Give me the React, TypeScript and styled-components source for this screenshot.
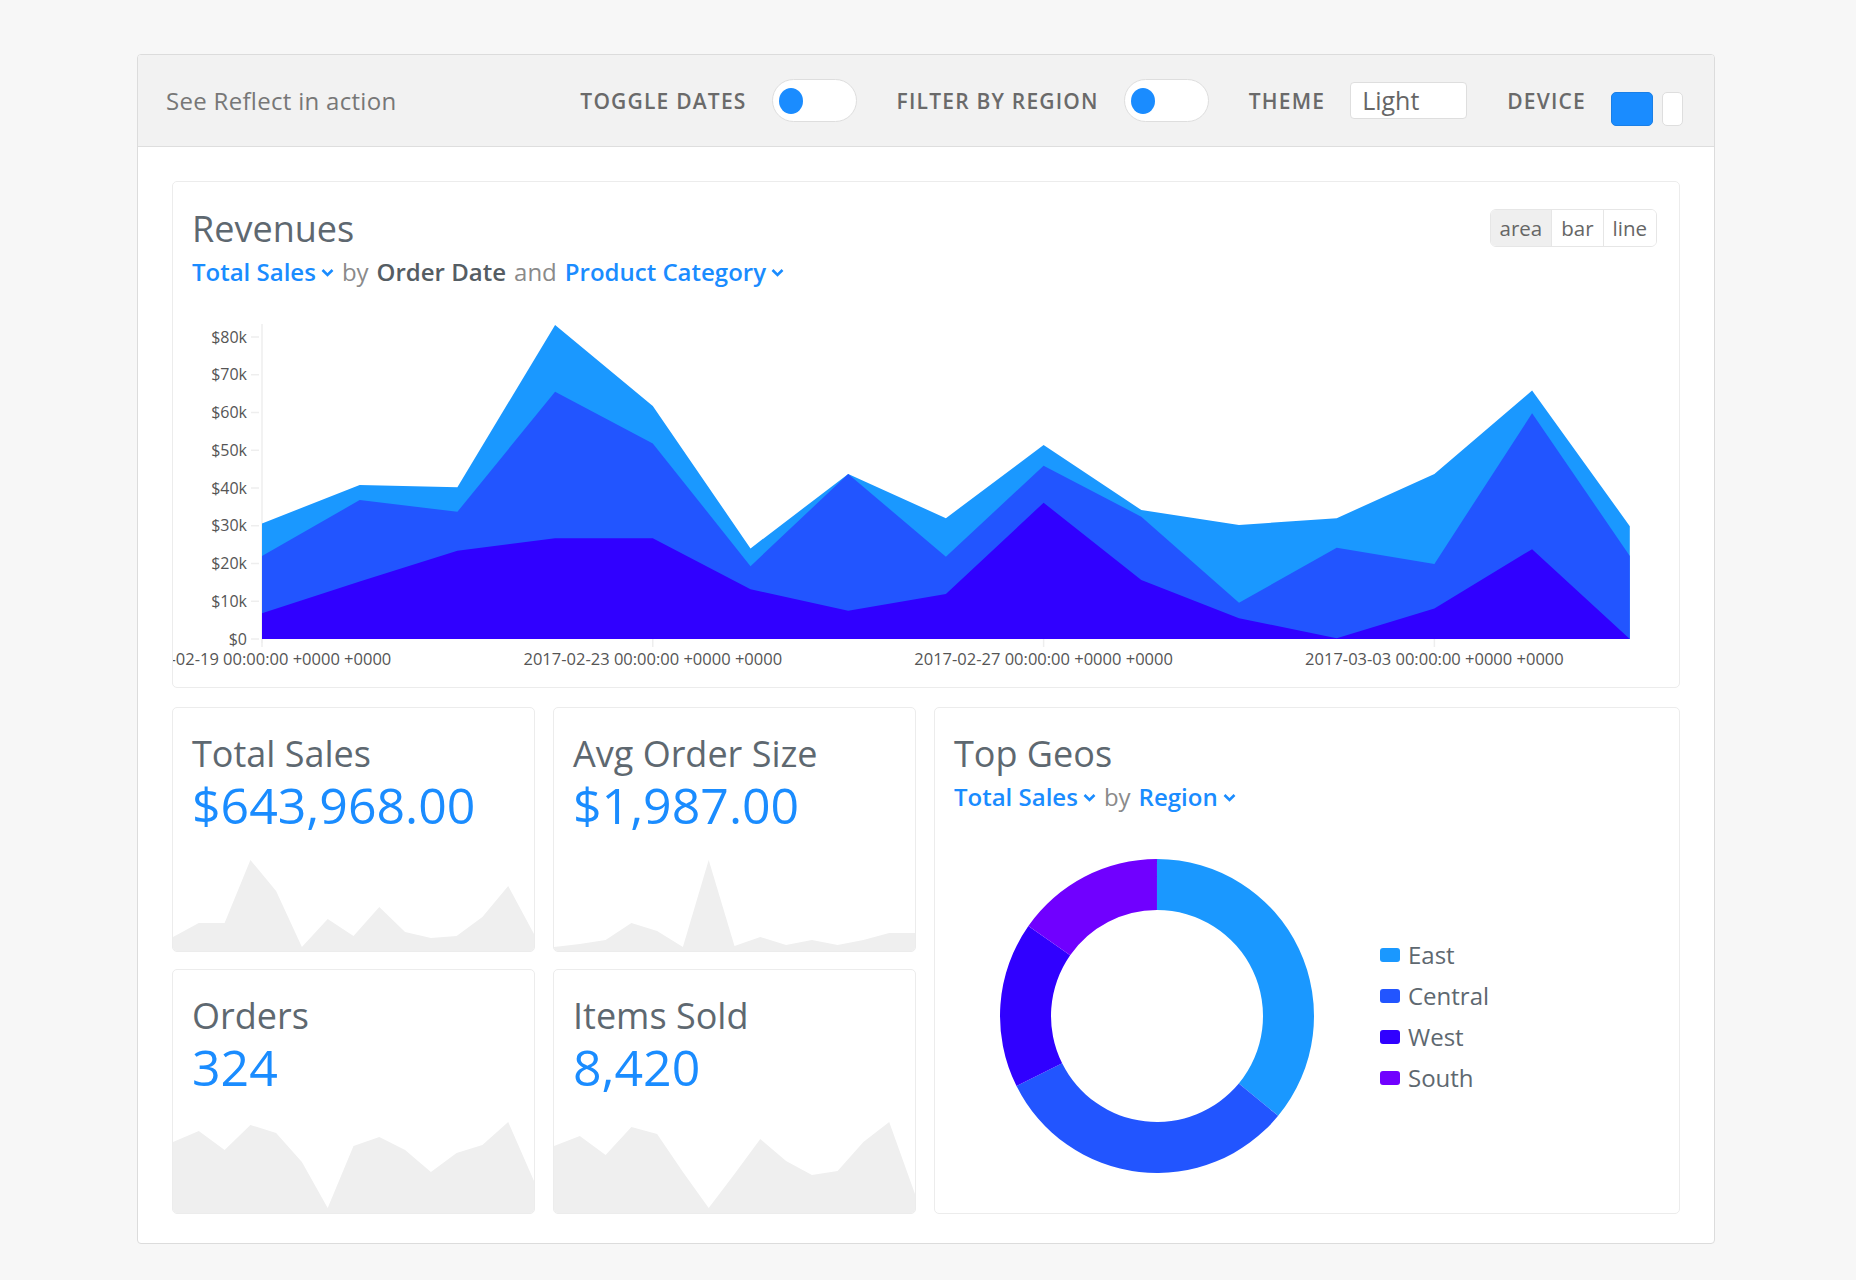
import React from "react";
import styled, { createGlobalStyle } from "styled-components";

const GlobalStyle = createGlobalStyle`
  body {
    margin: 0;
    background: #f7f7f7;
    font-family: "Open Sans", "Liberation Sans", sans-serif;
  }
`;

const BLUE = "#1a8cff";
const LAYER = ["#1a98ff", "#2255ff", "#3000ff", "#7000ff"];

const Page = styled.div`
  padding: 54px 0 36px;
`;

const Frame = styled.div`
  width: 1578px;
  margin: 0 0 0 137px;
  box-sizing: border-box;
  border: 1px solid #dcdcdc;
  border-radius: 4px;
  background: #fff;
  overflow: hidden;
`;

const TopBar = styled.div`
  height: 92px;
  box-sizing: border-box;
  display: flex;
  align-items: center;
  padding: 0 31px 0 28px;
  background: #f2f2f2;
  border-bottom: 1px solid #dedede;
`;

const Tagline = styled.div`
  font-size: 24px;
  letter-spacing: 0.3px;
  color: #777;
  margin-right: auto;
`;

const Controls = styled.div`
  display: flex;
  align-items: center;
  gap: 40px;
`;

const Control = styled.div`
  display: flex;
  align-items: center;
  gap: 25px;
`;

const ControlLabel = styled.span`
  font-size: 21px;
  font-weight: 600;
  letter-spacing: 1.2px;
  color: #6a6a6a;
  text-transform: uppercase;
`;

const Toggle = styled.div`
  width: 85px;
  height: 43px;
  box-sizing: border-box;
  border: 1px solid #dedede;
  border-radius: 22px;
  background: #fff;
  display: flex;
  align-items: center;
  padding-left: 6px;

  &::before {
    content: "";
    width: 24px;
    height: 26px;
    border-radius: 50%;
    background: ${BLUE};
  }
`;

const Select = styled.div`
  width: 117px;
  height: 37px;
  box-sizing: border-box;
  border: 1px solid #dedede;
  border-radius: 4px;
  background: #fff;
  padding: 0 11px;
  font-size: 25px;
  line-height: 35px;
  color: #666;
`;

const DeviceSet = styled.div`
  display: flex;
  gap: 9px;
  margin-top: 16px;
`;

const DeviceButton = styled.div<{ $active?: boolean; $w: number }>`
  width: ${({ $w }) => $w}px;
  height: 34px;
  box-sizing: border-box;
  border-radius: 5px;
  border: 1px solid ${({ $active }) => ($active ? "#1a7fe6" : "#dedede")};
  background: ${({ $active }) => ($active ? BLUE : "#fff")};
`;

const Content = styled.div`
  padding: 34px 34px 29px;
  display: flex;
  flex-direction: column;
  gap: 19px;
`;

const Card = styled.div`
  box-sizing: border-box;
  border: 1px solid #ececec;
  border-radius: 5px;
  background: #fff;
  overflow: hidden;
  display: flex;
  flex-direction: column;
`;

const RevenueCard = styled(Card)`
  height: 507px;
`;

const CardHead = styled.div`
  display: flex;
  justify-content: space-between;
  align-items: flex-start;
  padding: 25px 22px 0 19px;
`;

const Titles = styled.div`
  display: flex;
  flex-direction: column;
  gap: 6px;
`;

const Title = styled.div`
  font-size: 36px;
  line-height: 44px;
  color: #5e6870;
`;

const Subtitle = styled.div`
  font-size: 24px;
  line-height: 30px;
  color: #8a8a8a;
  display: flex;
  align-items: center;
  gap: 8px;
`;

const Pick = styled.span`
  color: ${BLUE};
  font-weight: 600;
  display: inline-flex;
  align-items: center;
  gap: 5px;
`;

const Strong = styled.span`
  color: #555d63;
  font-weight: 600;
`;

const Segmented = styled.div`
  display: flex;
  height: 38px;
  margin-top: 2px;
  box-sizing: border-box;
  border: 1px solid #e6e6e6;
  border-radius: 6px;
  overflow: hidden;
`;

const Segment = styled.div<{ $active?: boolean }>`
  padding: 0 9px;
  font-size: 20.5px;
  line-height: 36px;
  color: #666;
  background: ${({ $active }) => ($active ? "#efefef" : "#fff")};
  & + & {
    border-left: 1px solid #e6e6e6;
  }
`;

const ChartSvg = styled.svg`
  display: block;
  margin-top: 23px;
`;

const Grid = styled.div`
  display: grid;
  grid-template-columns: 363px 363px 1fr;
  grid-template-rows: 245px 245px;
  column-gap: 18px;
  row-gap: 17px;
`;

const KpiCard = styled(Card)`
  padding-top: 24px;
`;

const KpiText = styled.div`
  padding: 0 19px;
`;

const KpiValue = styled.div`
  font-size: 50px;
  line-height: 58px;
  color: ${BLUE};
`;

const Spark = styled.svg`
  display: block;
  margin-top: auto;
`;

const GeoCard = styled(Card)`
  grid-row: span 2;
  padding: 24px 19px;
`;

const DonutRow = styled.div`
  display: flex;
  align-items: center;
  margin-top: 44px;
  padding-left: 43px;
  gap: 63px;
`;

const Legend = styled.div`
  display: flex;
  flex-direction: column;
  gap: 11px;
`;

const LegendItem = styled.div`
  display: flex;
  align-items: center;
  gap: 8px;
  font-size: 24px;
  line-height: 30px;
  color: #5e6870;
`;

const Swatch = styled.span<{ $color: string }>`
  width: 20px;
  height: 14px;
  border-radius: 3px;
  background: ${({ $color }) => $color};
`;

const Chevron = () => (
  <svg width="13" height="9" viewBox="0 0 13 9">
    <polyline points="1.5,2 6.5,7 11.5,2" fill="none" stroke={BLUE} strokeWidth="2.6" />
  </svg>
);

// stacked tops in $k, read off the reference
const TOP = [30.6, 40.8, 40.2, 83.2, 61.7, 24, 43.7, 32, 51.4, 34.2, 30.2, 32, 43.7, 65.8, 29.9];
const MID = [22, 36.8, 33.7, 65.5, 51.8, 19.3, 43.7, 21.8, 45.9, 32.4, 9.6, 24.2, 19.9, 59.8, 22];
const LOW = [6.8, 15.2, 23.4, 26.7, 26.7, 13.2, 7.5, 11.9, 36.1, 15.6, 5.5, 0.2, 8.1, 23.8, 0];

const X0 = 89;
const STEP = 97.7;
const Y0 = 329;
const K = 3.775;

const areaPath = (vals: number[]) => {
  const pts = vals.map((v, i) => `${X0 + i * STEP},${Y0 - v * K}`);
  const last = X0 + (vals.length - 1) * STEP;
  return `M${X0},${Y0} L${pts.join(" L")} L${last},${Y0} Z`;
};

const DATES = [
  "2017-02-19 00:00:00 +0000 +0000",
  "2017-02-23 00:00:00 +0000 +0000",
  "2017-02-27 00:00:00 +0000 +0000",
  "2017-03-03 00:00:00 +0000 +0000",
];

const RevenueChart = () => (
  <ChartSvg width="1506" height="368" viewBox="0 0 1506 368">
    <line x1={X0} y1={14} x2={X0} y2={Y0 + 4} stroke="#eeeeee" strokeWidth="1.5" />
    {Array.from({ length: 9 }, (_, i) => {
      const y = Y0 - i * 10 * K;
      return (
        <g key={i}>
          <line x1={78} y1={y} x2={86} y2={y} stroke="#eeeeee" strokeWidth="1.5" />
          <text x={74} y={y + 5.5} textAnchor="end" fontSize="16" fill="#555">
            ${i === 0 ? "0" : `${i * 10}k`}
          </text>
        </g>
      );
    })}
    {DATES.map((d, i) => {
      const x = X0 + i * 4 * STEP;
      return (
        <g key={d}>
          <line x1={x} y1={Y0} x2={x} y2={Y0 + 8} stroke="#eeeeee" strokeWidth="1.5" />
          <text x={x} y={355} textAnchor="middle" fontSize="16.5" fill="#555">
            {d}
          </text>
        </g>
      );
    })}
    <path d={areaPath(TOP)} fill={LAYER[0]} />
    <path d={areaPath(MID)} fill={LAYER[1]} />
    <path d={areaPath(LOW)} fill={LAYER[2]} />
  </ChartSvg>
);

const Sparkline = ({ heights }: { heights: number[] }) => {
  const w = 361;
  const step = w / (heights.length - 1);
  const pts = heights.map((h, i) => `${(i * step).toFixed(1)},${100 - h}`).join(" L");
  return (
    <Spark width={w} height="100" viewBox={`0 0 ${w} 100`}>
      <path d={`M0,100 L${pts} L${w},100 Z`} fill="#efefef" />
    </Spark>
  );
};

const KPIS = [
  { title: "Total Sales", value: "$643,968.00", spark: [14, 28, 28, 91, 60, 4, 32, 15, 44, 19, 13, 15, 34, 65, 17] },
  { title: "Avg Order Size", value: "$1,987.00", spark: [4, 7, 11, 28, 20, 4, 91, 5, 14, 6, 11, 6, 11, 18, 18] },
  { title: "Orders", value: "324", spark: [71, 82, 63, 88, 80, 51, 5, 67, 76, 63, 41, 60, 68, 91, 32] },
  { title: "Items Sold", value: "8,420", spark: [67, 77, 58, 86, 79, 41, 5, 39, 74, 52, 38, 42, 71, 91, 19] },
];

const GEOS = [
  { name: "East", color: LAYER[0], from: 0, to: 129.5 },
  { name: "Central", color: LAYER[1], from: 129.5, to: 243.5 },
  { name: "West", color: LAYER[2], from: 243.5, to: 305 },
  { name: "South", color: LAYER[3], from: 305, to: 360 },
];

const polar = (r: number, a: number) => {
  const rad = (a * Math.PI) / 180;
  return [160 + r * Math.sin(rad), 160 - r * Math.cos(rad)];
};

const slice = (a0: number, a1: number, r0 = 106, r1 = 157) => {
  const large = a1 - a0 > 180 ? 1 : 0;
  const [x1, y1] = polar(r1, a0);
  const [x2, y2] = polar(r1, a1 - 0.01);
  const [x3, y3] = polar(r0, a1 - 0.01);
  const [x4, y4] = polar(r0, a0);
  return `M${x1},${y1} A${r1},${r1} 0 ${large} 1 ${x2},${y2} L${x3},${y3} A${r0},${r0} 0 ${large} 0 ${x4},${y4} Z`;
};

const KpiTile = ({ title, value, spark }: { title: string; value: string; spark: number[] }) => (
  <KpiCard>
    <KpiText>
      <Title>{title}</Title>
      <KpiValue>{value}</KpiValue>
    </KpiText>
    <Sparkline heights={spark} />
  </KpiCard>
);

const App = () => {
  return (
    <Page>
      <GlobalStyle />
      <Frame>
        <TopBar>
          <Tagline>See Reflect in action</Tagline>
          <Controls>
            <Control>
              <ControlLabel>Toggle Dates</ControlLabel>
              <Toggle />
            </Control>
            <Control>
              <ControlLabel>Filter by Region</ControlLabel>
              <Toggle />
            </Control>
            <Control>
              <ControlLabel>Theme</ControlLabel>
              <Select>Light</Select>
            </Control>
            <Control>
              <ControlLabel>Device</ControlLabel>
              <DeviceSet>
                <DeviceButton $active $w={42} />
                <DeviceButton $w={21} />
              </DeviceSet>
            </Control>
          </Controls>
        </TopBar>

        <Content>
          <RevenueCard>
            <CardHead>
              <Titles>
                <Title>Revenues</Title>
                <Subtitle>
                  <Pick>
                    Total Sales
                    <Chevron />
                  </Pick>
                  by <Strong>Order Date</Strong> and
                  <Pick>
                    Product Category
                    <Chevron />
                  </Pick>
                </Subtitle>
              </Titles>
              <Segmented>
                <Segment $active>area</Segment>
                <Segment>bar</Segment>
                <Segment>line</Segment>
              </Segmented>
            </CardHead>
            <RevenueChart />
          </RevenueCard>

          <Grid>
            {KPIS.slice(0, 2).map((k) => (
              <KpiTile key={k.title} {...k} />
            ))}
            <GeoCard>
              <Titles>
                <Title>Top Geos</Title>
                <Subtitle>
                  <Pick>
                    Total Sales
                    <Chevron />
                  </Pick>
                  by
                  <Pick>
                    Region
                    <Chevron />
                  </Pick>
                </Subtitle>
              </Titles>
              <DonutRow>
                <svg width="320" height="320" viewBox="0 0 320 320">
                  {GEOS.map((g) => (
                    <path key={g.name} d={slice(g.from, g.to)} fill={g.color} />
                  ))}
                </svg>
                <Legend>
                  {GEOS.map((g) => (
                    <LegendItem key={g.name}>
                      <Swatch $color={g.color} />
                      {g.name}
                    </LegendItem>
                  ))}
                </Legend>
              </DonutRow>
            </GeoCard>
            {KPIS.slice(2).map((k) => (
              <KpiTile key={k.title} {...k} />
            ))}
          </Grid>
        </Content>
      </Frame>
    </Page>
  );
};

export default App;
